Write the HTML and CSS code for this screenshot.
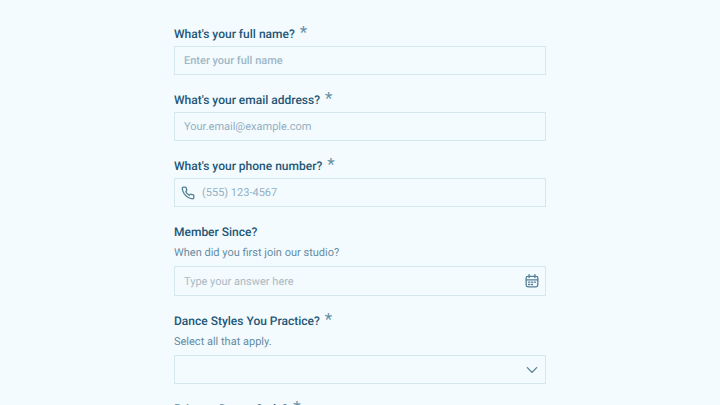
FILE: index.html
```html
<!DOCTYPE html>
<html lang="en">
<head>
<meta charset="utf-8">
<meta name="viewport" content="width=device-width, initial-scale=1">
<title>Member form</title>
<link rel="stylesheet" href="styles.css">
</head>
<body>
<form class="form">
  <div class="field">
    <label class="label" for="name">What's your full name? <span class="required">*</span></label>
    <div class="control"><input class="input medium" id="name" type="text" placeholder="Enter your full name" required></div>
  </div>
  <div class="field">
    <label class="label" for="email">What's your email address? <span class="required">*</span></label>
    <div class="control"><input class="input" id="email" type="email" placeholder="Your.email@example.com" required></div>
  </div>
  <div class="field">
    <label class="label" for="phone">What's your phone number? <span class="required">*</span></label>
    <div class="control with-lead">
      <svg class="icon" viewBox="0 0 24 24" aria-hidden="true"><path d="M22 16.92v3a2 2 0 0 1-2.18 2 19.8 19.8 0 0 1-8.63-3.07 19.5 19.5 0 0 1-6-6 19.8 19.8 0 0 1-3.07-8.67A2 2 0 0 1 4.11 2h3a2 2 0 0 1 2 1.72c.13.96.36 1.9.7 2.81a2 2 0 0 1-.45 2.11L8.09 9.91a16 16 0 0 0 6 6l1.27-1.27a2 2 0 0 1 2.11-.45c.91.34 1.85.57 2.81.7A2 2 0 0 1 22 16.92z"/></svg>
      <input class="input" id="phone" type="tel" placeholder="(555) 123-4567" required>
    </div>
  </div>
  <div class="field">
    <label class="label" for="since">Member Since?</label>
    <p class="hint">When did you first join our studio?</p>
    <div class="control date">
      <input class="input plain" id="since" type="text" placeholder="Type your answer here">
      <svg class="icon" viewBox="0 0 24 24" aria-hidden="true"><rect x="2" y="4" width="20" height="18" rx="3"/><path d="M7 1v5M17 1v5M2 10h20M6 14h2M11 14h2M16 14h2M6 18h2M11 18h2"/></svg>
    </div>
  </div>
  <div class="field">
    <label class="label" for="styles">Dance Styles You Practice? <span class="required">*</span></label>
    <p class="hint">Select all that apply.</p>
    <div class="control">
      <select class="input" id="styles" required><option value=""></option></select>
      <svg class="icon" viewBox="0 0 24 24" aria-hidden="true"><path d="M4 8l8 8 8-8"/></svg>
    </div>
  </div>
  <div class="field">
    <label class="label" for="goals">Primary Dance Style? <span class="required">*</span></label>
    <div class="control"><input class="input" id="goals" type="text" required></div>
  </div>
</form>
</body>
</html>
```
FILE: styles.css
```css
* {
  box-sizing: border-box;
}

html {
  overflow: hidden;
}

body {
  margin: 0;
  background: #f3fbff;
  color: #235675;
  font-family: Roboto, "Liberation Sans", sans-serif;
  text-rendering: geometricPrecision;
}

.form {
  display: flex;
  flex-direction: column;
  gap: 16px;
  max-width: 372px;
  margin: 0 auto;
  padding: 25px 0;
}

.field {
  display: flex;
  flex-direction: column;
}

.label {
  margin-bottom: 3px;
  font-size: 12px;
  font-weight: 500;
  line-height: 18px;
}

.required {
  margin-left: 2px;
  color: #6690a3;
  font-size: 17px;
  font-weight: 400;
  line-height: 1;
}

.hint {
  margin: 0 0 5px;
  color: #658ca1;
  font-size: 11px;
  line-height: 17px;
}

.control {
  display: flex;
  align-items: center;
  height: 29px;
  padding: 0 6px 0 9px;
  border: 1px solid #d3e8ec;
}

.date {
  height: 30px;
}

.with-lead {
  gap: 7px;
  padding-left: 6px;
}

.control:focus-within {
  border-color: #6690a3;
}

.input {
  flex: 1;
  min-width: 0;
  padding: 0;
  border: 0;
  outline: 0;
  appearance: none;
  background: transparent;
  color: #235675;
  font: 400 11px/17px Roboto, "Liberation Sans", sans-serif;
  text-rendering: inherit;
}

.medium {
  font-weight: 500;
}

.input::placeholder {
  color: #94afbf;
  opacity: 1;
}

.medium::placeholder {
  color: #9fb7c6;
}

.plain::placeholder {
  color: #abb9c1;
}

.icon {
  flex: none;
  width: 14px;
  height: 14px;
  fill: none;
  stroke: #527f94;
  stroke-width: 2.2;
  stroke-linecap: round;
  stroke-linejoin: round;
}
```
